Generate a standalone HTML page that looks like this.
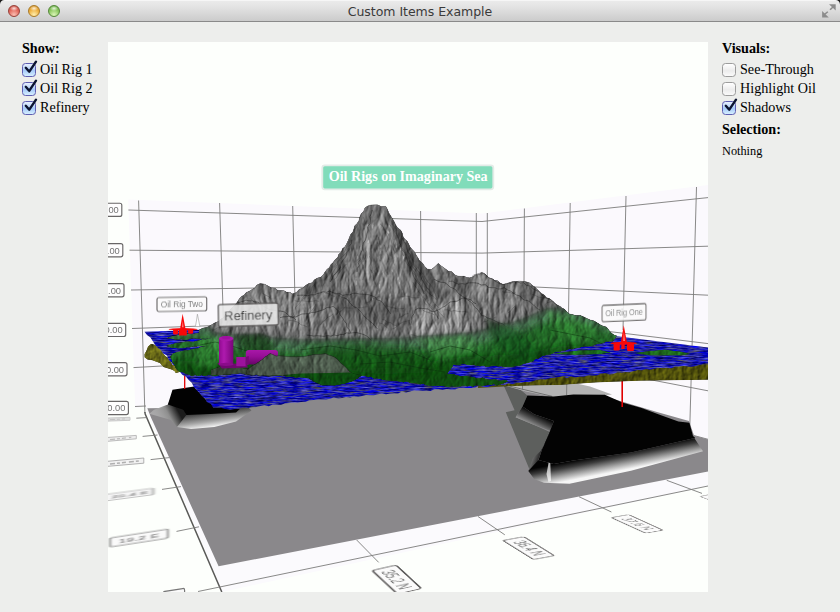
<!DOCTYPE html>
<html><head><meta charset="utf-8"><title>Custom Items Example</title>
<style>
html,body{margin:0;padding:0;}
body{width:840px;height:612px;overflow:hidden;background:#edeeec;position:relative;font-family:"Liberation Serif","DejaVu Serif",serif;color:#000;}
#tb{position:absolute;left:0;top:0;width:840px;height:21px;background:linear-gradient(#ececec,#e4e4e4 30%,#cbcbcb);border-bottom:1px solid #8a8a8a;box-shadow:inset 0 1px 0 #f6f6f6;}
#tb .t{position:absolute;left:0;width:840px;top:3.5px;text-align:center;font-family:"DejaVu Sans","Liberation Sans",sans-serif;font-size:12.5px;color:#3a3a3a;letter-spacing:-0.03px;}
.tl{position:absolute;top:5px;width:12px;height:12px;border-radius:50%;box-sizing:border-box;}
.lbl{position:absolute;white-space:nowrap;font-size:14.15px;line-height:16px;}
.h{font-weight:bold;}
.cb{position:absolute;width:14px;height:14px;border-radius:3.5px;box-sizing:border-box;}
.cb.on{background:linear-gradient(#eaf1ff,#a6caf8 55%,#d6efff);border:1px solid #5e5eb2;}
.cb.off{background:linear-gradient(#ffffff,#ececec 55%,#fafafa);border:1px solid #9c9c9c;}
svg{position:absolute;left:0;top:0;}
</style></head><body>
<div id="tb">
 <div class="tl" style="left:8px;background:radial-gradient(ellipse 4px 2.6px at 50% 24%,rgba(255,255,255,.8),rgba(255,255,255,0)),radial-gradient(circle at 50% 88%,#fbc0b4,#e2685c 55%,#c0483e);border:1px solid #97413a;"></div>
 <div class="tl" style="left:28px;background:radial-gradient(ellipse 4px 2.6px at 50% 24%,rgba(255,255,255,.8),rgba(255,255,255,0)),radial-gradient(circle at 50% 88%,#fff0b0,#eeb040 55%,#cc8c24);border:1px solid #a97a28;"></div>
 <div class="tl" style="left:48px;background:radial-gradient(ellipse 4px 2.6px at 50% 24%,rgba(255,255,255,.8),rgba(255,255,255,0)),radial-gradient(circle at 50% 88%,#dcf6b8,#8cc860 55%,#5ea63c);border:1px solid #55883a;"></div>
 <div class="t">Custom Items Example</div>
</div>
<div class="lbl h" style="left:22px;top:40px;">Show:</div>
<div class="cb on" style="left:22px;top:63px;"></div><div class="lbl" style="left:40px;top:61px;">Oil Rig 1</div>
<div class="cb on" style="left:22px;top:82px;"></div><div class="lbl" style="left:40px;top:80px;">Oil Rig 2</div>
<div class="cb on" style="left:22px;top:101px;"></div><div class="lbl" style="left:40px;top:99px;">Refinery</div>

<div class="lbl h" style="left:722px;top:40px;">Visuals:</div>
<div class="cb off" style="left:722px;top:63px;"></div><div class="lbl" style="left:740px;top:61px;">See-Through</div>
<div class="cb off" style="left:722px;top:82px;"></div><div class="lbl" style="left:740px;top:80px;">Highlight Oil</div>
<div class="cb on" style="left:722px;top:101px;"></div><div class="lbl" style="left:740px;top:99px;">Shadows</div>
<div class="lbl h" style="left:722px;top:121px;">Selection:</div>
<div class="lbl" style="left:722px;top:142.5px;font-size:12.3px;">Nothing</div>

<svg width="840" height="612" viewBox="0 0 840 612">
<defs>
<clipPath id="vp"><rect x="108" y="42" width="600" height="550"/></clipPath>
<linearGradient id="gsk2" gradientUnits="userSpaceOnUse" x1="600" y1="455.5" x2="603.6" y2="474"><stop offset="0" stop-color="#030303"/><stop offset="0.3" stop-color="#3c3c3c"/><stop offset="0.65" stop-color="#9c9c9c"/><stop offset="1" stop-color="#f6f6f6"/></linearGradient>
<linearGradient id="gsk2l" gradientUnits="userSpaceOnUse" x1="547" y1="445" x2="536" y2="441"><stop offset="0" stop-color="#050505"/><stop offset="1" stop-color="#8c8c8c"/></linearGradient>
<linearGradient id="gsk2b" gradientUnits="userSpaceOnUse" x1="537" y1="414" x2="531" y2="426"><stop offset="0" stop-color="#080808"/><stop offset="0.45" stop-color="#484848"/><stop offset="1" stop-color="#a4a4a4"/></linearGradient>
<linearGradient id="gsk1" gradientUnits="userSpaceOnUse" x1="200" y1="406" x2="203" y2="428"><stop offset="0" stop-color="#000"/><stop offset="0.35" stop-color="#444"/><stop offset="0.75" stop-color="#a6a6a6"/><stop offset="1" stop-color="#f0f0f0"/></linearGradient>
<linearGradient id="gsk1b" gradientUnits="userSpaceOnUse" x1="172" y1="400" x2="150" y2="412"><stop offset="0" stop-color="#1c1c1c"/><stop offset="0.4" stop-color="#8e8e8e"/><stop offset="1" stop-color="#c8c8c8" stop-opacity="0.5"/></linearGradient>
<linearGradient id="gcyl" x1="0" y1="0" x2="1" y2="0"><stop offset="0" stop-color="#900a90"/><stop offset="0.35" stop-color="#ae1aae"/><stop offset="1" stop-color="#780678"/></linearGradient>
<linearGradient id="gtank" x1="0" y1="0" x2="0" y2="1"><stop offset="0" stop-color="#a818a8"/><stop offset="0.45" stop-color="#960e96"/><stop offset="1" stop-color="#680468"/></linearGradient>
<filter id="b03" x="-10%" y="-30%" width="120%" height="160%"><feGaussianBlur stdDeviation="0.35"/></filter>
<filter id="b05" x="-10%" y="-30%" width="120%" height="160%"><feGaussianBlur stdDeviation="0.5"/></filter>
<filter id="b07" x="-10%" y="-30%" width="120%" height="160%"><feGaussianBlur stdDeviation="0.8"/></filter>
<filter id="b2" x="-20%" y="-20%" width="140%" height="140%"><feGaussianBlur stdDeviation="2"/></filter>
<filter id="b3" x="-10%" y="-20%" width="120%" height="140%"><feGaussianBlur stdDeviation="3.5"/></filter>
<filter id="rock" x="140" y="195" width="570" height="200" filterUnits="userSpaceOnUse" color-interpolation-filters="sRGB">
  <feTurbulence type="turbulence" baseFrequency="0.09 0.04" numOctaves="4" seed="7" result="n"/>
  <feDiffuseLighting in="n" surfaceScale="0.9" diffuseConstant="1" lighting-color="#ffffff" result="l"><feDistantLight azimuth="200" elevation="30"/></feDiffuseLighting>
  <feComposite in="SourceGraphic" in2="l" operator="arithmetic" k1="1.66" k2="0" k3="0" k4="0" result="m"/>
  <feComposite in="m" in2="SourceGraphic" operator="in"/>
</filter>
<filter id="grass" x="140" y="290" width="570" height="110" filterUnits="userSpaceOnUse" color-interpolation-filters="sRGB">
  <feTurbulence type="turbulence" baseFrequency="0.07 0.05" numOctaves="4" seed="21" result="n"/>
  <feDiffuseLighting in="n" surfaceScale="0.75" diffuseConstant="1" lighting-color="#ffffff" result="l"><feDistantLight azimuth="200" elevation="30"/></feDiffuseLighting>
  <feComposite in="SourceGraphic" in2="l" operator="arithmetic" k1="1.9" k2="0" k3="0" k4="0" result="m"/>
  <feComposite in="m" in2="SourceGraphic" operator="in"/>
</filter>
<filter id="olive" x="140" y="330" width="570" height="70" filterUnits="userSpaceOnUse" color-interpolation-filters="sRGB">
  <feTurbulence type="fractalNoise" baseFrequency="0.2 0.12" numOctaves="3" seed="11" result="n"/>
  <feDiffuseLighting in="n" surfaceScale="0.9" diffuseConstant="1" lighting-color="#ffffff" result="l"><feDistantLight azimuth="220" elevation="30"/></feDiffuseLighting>
  <feComposite in="SourceGraphic" in2="l" operator="arithmetic" k1="1.8" k2="0" k3="0" k4="0" result="m"/>
  <feComposite in="m" in2="SourceGraphic" operator="in"/>
</filter>
<filter id="sea" x="140" y="315" width="570" height="100" filterUnits="userSpaceOnUse" color-interpolation-filters="sRGB">
  <feTurbulence type="fractalNoise" baseFrequency="0.09 0.8" numOctaves="3" seed="3" result="n"/>
  <feColorMatrix in="n" type="matrix" values="0 0.8 0 0 -0.27  0 0.8 0 0 -0.27  1.0 0 0 0 0.15  0 0 0 0 1" result="c"/>
  <feComposite in="c" in2="SourceGraphic" operator="in"/>
</filter>
</defs>
<g clip-path="url(#vp)">
<rect x="108" y="42" width="600" height="550" fill="#fdfffc"/>
<polygon points="128.2,199.5 482.0,213.5 482.0,380.0 145.0,407.0 135.2,408.0" fill="#fbf9fd"/>
<polygon points="482.0,213.5 708.0,185.0 708.0,439.3 482.0,379.0" fill="#fbf9fd"/>
<polygon points="145.0,407.0 482.0,379.0 708.0,439.3 708.0,486.0 222.0,592.0" fill="#fbfafd"/>
<line x1="128.4" y1="210" x2="482" y2="221.5" stroke="#7c7c7a" stroke-width="0.9" fill="none"/>
<line x1="482" y1="221.5" x2="708" y2="197.6" stroke="#7c7c7a" stroke-width="0.9" fill="none"/>
<line x1="129.5" y1="250.2" x2="482" y2="253.1" stroke="#7c7c7a" stroke-width="0.9" fill="none"/>
<line x1="482" y1="253.1" x2="708" y2="246.2" stroke="#7c7c7a" stroke-width="0.9" fill="none"/>
<line x1="131" y1="290" x2="482" y2="284.5" stroke="#7c7c7a" stroke-width="0.9" fill="none"/>
<line x1="482" y1="284.5" x2="708" y2="295.2" stroke="#7c7c7a" stroke-width="0.9" fill="none"/>
<line x1="132" y1="328.5" x2="482" y2="316" stroke="#7c7c7a" stroke-width="0.9" fill="none"/>
<line x1="482" y1="316" x2="708" y2="343.6" stroke="#7c7c7a" stroke-width="0.9" fill="none"/>
<line x1="133.5" y1="367.6" x2="482" y2="348" stroke="#7c7c7a" stroke-width="0.9" fill="none"/>
<line x1="482" y1="347.3" x2="708" y2="390.8" stroke="#7c7c7a" stroke-width="0.9" fill="none"/>
<line x1="135" y1="406.5" x2="146" y2="406" stroke="#7c7c7a" stroke-width="0.9" fill="none"/>
<line x1="138.6" y1="200.5" x2="144.9" y2="413" stroke="#7c7c7a" stroke-width="0.9" fill="none"/>
<line x1="219.6" y1="203" x2="224" y2="340" stroke="#7c7c7a" stroke-width="0.9" fill="none"/>
<line x1="292.7" y1="206" x2="295" y2="300" stroke="#7c7c7a" stroke-width="0.9" fill="none"/>
<line x1="420.6" y1="211" x2="421" y2="265" stroke="#7c7c7a" stroke-width="0.9" fill="none"/>
<line x1="476.3" y1="213" x2="476.3" y2="280" stroke="#7c7c7a" stroke-width="0.9" fill="none"/>
<line x1="487.3" y1="213" x2="487.3" y2="285" stroke="#7c7c7a" stroke-width="0.9" fill="none"/>
<line x1="524.4" y1="208.5" x2="524" y2="285" stroke="#7c7c7a" stroke-width="0.9" fill="none"/>
<line x1="570.2" y1="203" x2="568.5" y2="315" stroke="#7c7c7a" stroke-width="0.9" fill="none"/>
<line x1="626" y1="196" x2="623" y2="330" stroke="#7c7c7a" stroke-width="0.9" fill="none"/>
<line x1="696.5" y1="187" x2="689.6" y2="434" stroke="#7c7c7a" stroke-width="0.9" fill="none"/>
<polyline points="144.9,412 145.2,414 221.8,592" stroke="#5a5a58" stroke-width="1.5" fill="none"/>
<line x1="198" y1="591.5" x2="708" y2="486" stroke="#7c7c7a" stroke-width="0.9" fill="none"/>
<line x1="136.3" y1="418.2" x2="146.5" y2="417.6" stroke="#7c7c7a" stroke-width="0.9" fill="none"/>
<line x1="142.6" y1="436.4" x2="157.5" y2="435" stroke="#7c7c7a" stroke-width="0.9" fill="none"/>
<line x1="150.6" y1="459.6" x2="169.5" y2="457.6" stroke="#7c7c7a" stroke-width="0.9" fill="none"/>
<line x1="162" y1="489.4" x2="181" y2="486.6" stroke="#7c7c7a" stroke-width="0.9" fill="none"/>
<line x1="176.5" y1="531.4" x2="199" y2="526.8" stroke="#7c7c7a" stroke-width="0.9" fill="none"/>
<line x1="356.7" y1="540" x2="378.7" y2="562.4" stroke="#7c7c7a" stroke-width="0.9" fill="none"/>
<line x1="478" y1="516.5" x2="504.8" y2="534.8" stroke="#7c7c7a" stroke-width="0.9" fill="none"/>
<line x1="579" y1="496.7" x2="611.4" y2="512" stroke="#7c7c7a" stroke-width="0.9" fill="none"/>
<line x1="666.7" y1="480.3" x2="702" y2="493.4" stroke="#7c7c7a" stroke-width="0.9" fill="none"/>
<line x1="482" y1="379" x2="708" y2="439.3" stroke="#7c7c7a" stroke-width="0.9" fill="none"/>
<polygon points="147.3,408.3 212.0,407.6 216.0,403.0 330.0,395.0 410.0,388.0 504.0,381.0 560.0,381.0 600.0,395.0 657.0,412.0 689.0,421.0 694.0,435.5 708.0,439.5 708.0,471.6 218.6,566.3 151.2,417.9" fill="#8a888b"/>
<polygon points="503.8,385.8 508.7,385.8 520.5,389.7 527.4,395.6 522.5,406.4 515.6,417.2 534.2,425.0 550.0,431.9 546.0,441.7 540.0,451.5 529.3,469.1 505.8,412.3 514.6,410.3" fill="#5d5f5d"/>
<polygon points="504.0,385.5 540.0,384.0 572.0,382.5 590.0,386.5 612.0,394.5 604.0,395.5 552.0,397.0 526.0,391.5" fill="#b3b3b3"/>
<line x1="504.8" y1="385" x2="552" y2="396.3" stroke="#6a6a6a" stroke-width="0.9"/>
<line x1="522.6" y1="381" x2="522.5" y2="390" stroke="#777" stroke-width="0.9"/>
<line x1="566.8" y1="381" x2="566.6" y2="395" stroke="#777" stroke-width="0.9"/>
<polygon points="522.5,406.4 534.2,414.2 553.8,421.0 550.0,430.9 544.0,428.5 534.2,425.0 515.6,417.2" fill="url(#gsk2b)"/>
<polygon points="553.8,421.0 549.0,433.8 542.0,449.5 537.2,463.2 528.3,471.0 533.0,458.0 540.0,451.5 546.0,441.7 550.0,431.9" fill="url(#gsk2l)"/>
<polygon points="538.5,460.0 553.8,464.0 573.4,460.5 631.0,452.5 695.0,438.0 693.0,436.0 703.0,451.2 631.0,470.8 569.5,483.8 544.0,482.8 534.2,478.9 528.3,471.0" fill="url(#gsk2)"/>
<polygon points="550,455 551,481 548.5,482 546.5,474" fill="#fff" opacity="0.7" filter="url(#b05)"/>
<polygon points="527.4,395.6 553.8,396.6 573.4,394.6 604.8,394.8 623.0,402.7 641.6,408.0 661.0,415.3 678.4,421.4 689.4,422.7 693.0,436.0 695.0,438.0 631.0,452.5 573.4,460.5 553.8,464.0 538.5,460.0 542.0,449.5 549.0,433.8 553.8,421.0 534.2,414.2 522.5,406.4" fill="#030303"/>
<polygon points="180.0,404.0 177.0,426.9 191.0,429.0 214.3,426.9 236.0,421.4 251.5,410.6 246.8,406.0 210.0,400.0" fill="url(#gsk1)"/>
<polygon points="172.0,396.0 167.9,404.4 154.0,409.8 149.3,413.7 171.0,420.0 177.0,427.0 186.4,415.0 183.0,409.0" fill="url(#gsk1b)"/>
<polygon points="172.5,389.7 194.2,386.6 197.3,390.5 213.0,407.0 240.0,408.8 236.0,412.5 210.0,414.0 186.4,415.0 183.3,409.8 167.9,404.4" fill="#020202"/>
<line x1="184.7" y1="376" x2="184.7" y2="389" stroke="#e00000" stroke-width="1.3"/>
<line x1="622.2" y1="380" x2="622.2" y2="407" stroke="#e00000" stroke-width="1.6"/>
<polygon points="500.0,381.0 550.0,376.0 613.6,371.6 642.0,368.0 708.0,362.6 708.0,379.8 640.0,380.7 595.7,382.5 560.0,385.0 530.0,385.5 504.0,386.5" fill="#58580d" filter="url(#olive)"/>
<polygon points="478.0,386.0 504.0,384.5 504.0,386.5 478.0,388.0" fill="#4e4e10"/>
<polygon points="144.5,357.5 144.4,354.1 146.2,351.1 147.9,346.4 151.0,343.7 155.1,344.8 158.5,348.0 160.7,349.6 162.2,351.8 163.9,353.9 165.5,356.1 167.8,357.6 169.1,360.1 171.2,361.8 172.2,364.6 175.1,365.5 175.8,368.6 178.3,369.9 180.0,372.0 175.8,373.2 174.3,371.0 171.9,369.7 168.0,368.6 163.8,367.3 161.8,365.5 160.1,363.2 156.1,361.7 152.0,360.3 147.8,359.8" fill="#74741a" filter="url(#olive)"/>
<polygon points="144.5,331.8 482.0,319.5 708.0,347.5 708.0,364.2 703.8,364.2 699.7,364.7 695.7,366.3 691.6,366.7 687.4,366.5 683.2,365.9 679.1,366.8 675.0,366.8 670.9,368.2 666.7,367.9 662.6,367.9 658.4,368.0 654.3,368.4 650.3,369.9 646.1,368.9 642.0,370.2 637.9,369.9 633.9,370.9 629.9,372.2 625.7,371.9 621.7,372.5 617.5,372.2 613.6,374.0 609.4,374.6 605.0,373.3 600.8,373.9 596.7,375.6 592.4,375.8 588.2,375.5 584.0,376.6 579.7,376.6 575.5,377.4 571.2,376.4 567.0,378.0 562.6,376.5 558.4,377.0 554.2,377.6 550.0,378.3 545.9,379.4 541.6,379.3 537.4,379.8 533.3,380.9 529.2,382.3 524.9,381.8 520.8,383.0 516.5,383.0 512.4,384.0 508.1,383.5 504.0,385.2 499.9,384.7 495.8,385.2 491.7,385.7 487.7,387.0 483.6,387.1 479.4,385.8 475.4,387.5 471.4,387.9 467.2,388.0 463.1,387.8 459.0,388.1 455.0,389.4 450.9,389.7 446.8,389.0 442.7,389.9 438.6,389.3 434.5,389.2 430.5,390.9 426.3,390.4 422.3,390.8 418.1,390.4 414.0,390.3 410.0,391.6 406.0,392.4 401.9,391.5 398.1,393.5 394.0,393.3 390.0,393.5 386.1,394.3 382.0,393.6 378.0,394.3 374.0,395.2 370.0,395.2 366.0,395.0 362.0,396.1 358.1,397.0 354.0,396.5 350.1,397.4 346.0,396.9 342.1,398.1 338.1,398.6 333.9,397.5 330.0,398.7 326.0,399.5 321.8,399.4 317.7,399.6 313.6,400.1 309.5,400.3 305.5,401.8 301.4,401.9 297.3,402.5 293.2,402.6 289.1,403.0 285.0,403.3 281.0,404.9 276.8,404.7 272.7,404.5 268.7,406.3 264.5,405.3 260.4,405.9 256.4,406.9 252.3,407.3 248.2,408.1 244.0,407.6 240.0,408.5 235.0,409.1 230.0,409.8 225.0,409.1 221.1,407.7 217.0,407.7 213.1,407.4 210.9,403.9 206.8,402.1 204.9,398.3 201.6,395.8 199.1,392.5 196.1,389.8 193.6,386.5 191.7,382.7 188.7,379.9 186.1,376.8 182.2,374.8 179.8,371.4 177.8,367.8 174.0,365.7 171.4,362.5 168.5,359.6 166.9,355.6 163.3,353.4 160.8,350.1 157.5,347.6 154.9,344.4 152.7,340.9 150.4,337.5 147.0,335.0" fill="#1a1ac0" filter="url(#sea)"/>
<clipPath id="terclip"><polygon points="199.0,329.9 202.8,328.0 206.9,327.2 211.9,324.5 215.2,322.5 218.9,321.3 220.9,318.9 224.0,317.4 225.3,314.2 228.2,312.7 229.8,309.8 232.3,307.5 234.7,305.0 237.0,302.5 238.9,299.3 241.2,296.4 244.1,295.1 246.0,292.5 249.0,291.3 251.5,289.7 254.6,288.0 256.8,285.1 260.0,283.5 264.5,284.0 268.6,286.2 271.4,287.8 274.7,288.0 277.4,289.9 280.6,290.5 283.8,290.4 286.6,292.1 289.8,292.2 292.5,293.8 296.3,292.4 299.1,289.3 302.9,287.9 305.4,285.4 308.5,283.6 312.0,282.7 314.3,279.8 317.3,278.0 321.0,277.1 323.4,274.4 325.1,271.8 326.9,269.3 329.4,267.4 330.7,264.6 333.1,262.6 334.9,259.7 337.6,257.6 338.7,254.3 341.3,252.0 342.3,248.8 345.1,246.5 346.7,243.6 348.1,240.6 349.3,237.4 350.6,234.5 352.8,232.0 353.8,229.0 354.6,225.7 357.1,223.4 358.8,220.7 359.5,217.4 361.0,214.0 363.6,211.2 364.9,207.8 367.6,205.9 370.8,204.9 374.2,204.8 377.5,204.7 381.4,206.5 385.8,206.2 387.5,209.3 388.8,212.7 390.7,215.8 392.6,218.7 394.3,221.7 395.8,224.9 397.6,227.8 400.7,230.0 402.3,233.1 403.0,236.3 404.6,238.9 407.1,241.0 408.7,243.7 409.9,246.6 411.8,249.0 414.3,251.6 416.1,254.7 417.9,257.7 419.6,260.8 422.6,263.0 424.6,266.3 427.4,268.9 431.3,269.5 433.8,267.5 436.1,265.4 438.1,263.3 441.5,266.0 445.1,268.6 448.2,270.9 452.1,271.8 454.8,274.8 457.8,275.9 460.9,276.2 464.1,276.1 466.9,277.5 469.9,277.7 472.9,276.6 475.7,275.0 478.9,274.4 481.9,272.8 485.6,274.4 488.3,277.5 492.1,278.8 494.7,280.3 497.9,280.7 500.2,282.9 503.0,284.2 506.3,283.9 509.3,282.5 512.5,281.5 515.8,281.8 519.0,280.9 522.7,281.3 526.4,281.8 530.0,282.9 532.2,285.3 534.9,286.9 537.1,289.2 539.4,291.3 541.7,293.4 544.5,295.0 546.4,297.5 549.4,298.6 551.8,300.4 554.2,302.4 556.3,304.6 559.0,306.0 561.5,307.7 564.5,309.1 566.7,311.5 569.0,313.7 572.6,314.6 576.2,315.5 580.1,315.3 583.6,316.7 587.0,318.4 590.4,319.9 593.9,320.7 596.9,322.6 599.9,324.4 603.0,326.0 606.5,326.9 608.6,329.8 610.9,332.6 613.7,334.8 616.7,335.7 613.0,341.2 609.7,341.3 606.4,341.6 603.3,343.1 600.0,343.6 597.0,343.9 594.1,345.0 591.2,346.1 588.0,346.2 584.7,346.3 581.5,347.1 578.3,347.7 575.0,348.1 572.1,349.3 568.9,349.0 566.0,350.3 562.9,350.5 560.0,351.5 556.9,351.6 553.9,352.4 551.1,354.2 548.0,354.4 545.1,355.3 541.8,356.0 539.2,358.2 535.7,358.5 533.2,361.0 530.0,362.0 527.0,363.0 523.8,363.5 521.0,364.9 518.0,365.8 514.7,366.3 511.3,366.7 508.0,366.7 504.7,366.9 501.3,365.9 498.0,366.2 495.0,365.8 492.0,365.6 489.0,366.5 486.0,366.5 483.0,365.4 480.0,366.3 477.0,365.6 474.0,365.1 471.0,364.9 468.0,364.8 465.0,364.1 462.0,363.9 459.0,364.9 456.0,364.7 453.3,364.5 451.5,367.9 449.1,370.8 447.0,374.1 450.3,374.0 453.7,374.2 456.8,375.6 460.1,376.0 463.4,376.1 466.8,376.0 470.0,376.8 473.2,377.0 476.3,378.2 479.4,378.7 482.7,377.6 485.8,379.4 488.9,379.7 492.1,379.8 495.4,379.2 498.4,380.7 501.6,380.8 504.9,380.1 508.1,381.3 504.1,382.9 500.0,384.4 497.0,385.4 494.0,384.1 491.0,384.7 488.0,385.1 485.0,385.3 482.0,386.0 479.0,385.2 476.0,385.3 473.0,386.6 470.0,385.8 467.0,386.2 464.0,385.3 461.0,386.3 458.0,386.5 455.0,386.5 452.0,386.3 449.0,386.7 446.0,386.5 443.0,386.0 440.0,386.0 436.7,385.6 433.3,385.9 429.9,385.8 426.6,385.2 423.4,383.7 420.0,384.2 416.7,383.3 413.3,383.1 410.0,382.6 406.8,381.6 403.3,382.3 400.0,381.4 396.7,381.1 393.3,380.9 390.0,380.4 386.6,380.3 383.3,380.1 380.1,378.7 377.0,378.2 373.9,378.4 371.1,376.8 367.9,377.2 365.0,375.8 362.0,375.5 358.4,376.9 355.4,379.3 351.9,380.7 348.5,381.5 345.2,382.7 341.9,384.0 338.5,384.6 335.0,385.2 331.9,385.0 328.8,384.5 325.6,384.6 322.5,384.9 319.7,383.7 316.9,382.5 314.6,380.4 311.8,379.2 309.0,377.9 305.8,377.7 302.7,377.0 299.5,377.1 296.3,377.4 293.2,377.0 290.0,376.6 286.9,376.7 283.8,375.6 280.6,375.8 277.5,375.9 274.4,376.0 271.2,375.8 268.1,376.3 265.0,375.6 261.9,375.1 258.7,375.2 255.6,374.6 252.6,373.5 249.4,373.3 246.2,374.2 243.2,372.5 240.0,372.7 236.8,372.7 233.6,373.0 230.5,374.3 227.3,374.7 224.1,374.2 220.9,374.2 217.8,375.6 214.7,376.1 211.4,375.3 208.1,374.9 204.9,376.0 201.6,375.1 198.3,375.9 195.1,375.1 191.7,375.9 189.0,374.4 185.9,373.9 183.3,372.2 180.1,372.0 177.6,370.2 175.5,367.8 174.6,364.9 172.6,362.5 171.7,359.6 170.2,356.7 173.0,353.4 176.0,352.6 179.1,352.1 182.0,351.1 185.0,350.5 188.1,350.6 191.0,349.4 193.9,348.8 197.6,348.4 200.9,347.0 204.7,347.0 208.0,345.6 205.1,346.5 202.0,346.2 198.9,345.5 196.0,346.5 193.0,346.3 190.0,347.3 187.0,347.2 184.0,347.9 181.0,348.1 178.0,348.2 175.0,347.8 172.0,347.7 166.8,346.0 171.0,344.7 174.6,343.6 178.3,343.0 182.0,342.5 185.4,341.8 189.0,341.8 192.6,342.2 196.0,341.0 199.2,340.4 202.2,339.2 205.6,339.4 208.8,338.5 212.0,338.1 209.0,338.3 206.0,338.7 203.0,338.6 200.0,338.8 197.0,338.4 194.0,338.3 191.0,338.5 188.0,339.4 184.8,340.1 181.5,339.0 178.3,339.5 175.0,339.5 170.9,338.5 166.9,338.2 172.0,336.3 175.2,335.7 178.4,334.8 181.6,334.2 185.0,334.3 188.4,333.5 192.1,334.3 195.5,333.3 199.0,332.7"/></clipPath>
<g filter="url(#rock)">
<polygon points="199.0,329.9 202.8,328.0 206.9,327.2 211.9,324.5 215.2,322.5 218.9,321.3 220.9,318.9 224.0,317.4 225.3,314.2 228.2,312.7 229.8,309.8 232.3,307.5 234.7,305.0 237.0,302.5 238.9,299.3 241.2,296.4 244.1,295.1 246.0,292.5 249.0,291.3 251.5,289.7 254.6,288.0 256.8,285.1 260.0,283.5 264.5,284.0 268.6,286.2 271.4,287.8 274.7,288.0 277.4,289.9 280.6,290.5 283.8,290.4 286.6,292.1 289.8,292.2 292.5,293.8 296.3,292.4 299.1,289.3 302.9,287.9 305.4,285.4 308.5,283.6 312.0,282.7 314.3,279.8 317.3,278.0 321.0,277.1 323.4,274.4 325.1,271.8 326.9,269.3 329.4,267.4 330.7,264.6 333.1,262.6 334.9,259.7 337.6,257.6 338.7,254.3 341.3,252.0 342.3,248.8 345.1,246.5 346.7,243.6 348.1,240.6 349.3,237.4 350.6,234.5 352.8,232.0 353.8,229.0 354.6,225.7 357.1,223.4 358.8,220.7 359.5,217.4 361.0,214.0 363.6,211.2 364.9,207.8 367.6,205.9 370.8,204.9 374.2,204.8 377.5,204.7 381.4,206.5 385.8,206.2 387.5,209.3 388.8,212.7 390.7,215.8 392.6,218.7 394.3,221.7 395.8,224.9 397.6,227.8 400.7,230.0 402.3,233.1 403.0,236.3 404.6,238.9 407.1,241.0 408.7,243.7 409.9,246.6 411.8,249.0 414.3,251.6 416.1,254.7 417.9,257.7 419.6,260.8 422.6,263.0 424.6,266.3 427.4,268.9 431.3,269.5 433.8,267.5 436.1,265.4 438.1,263.3 441.5,266.0 445.1,268.6 448.2,270.9 452.1,271.8 454.8,274.8 457.8,275.9 460.9,276.2 464.1,276.1 466.9,277.5 469.9,277.7 472.9,276.6 475.7,275.0 478.9,274.4 481.9,272.8 485.6,274.4 488.3,277.5 492.1,278.8 494.7,280.3 497.9,280.7 500.2,282.9 503.0,284.2 506.3,283.9 509.3,282.5 512.5,281.5 515.8,281.8 519.0,280.9 522.7,281.3 526.4,281.8 530.0,282.9 532.2,285.3 534.9,286.9 537.1,289.2 539.4,291.3 541.7,293.4 544.5,295.0 546.4,297.5 549.4,298.6 551.8,300.4 554.2,302.4 556.3,304.6 559.0,306.0 561.5,307.7 564.5,309.1 566.7,311.5 569.0,313.7 572.6,314.6 576.2,315.5 580.1,315.3 583.6,316.7 587.0,318.4 590.4,319.9 593.9,320.7 596.9,322.6 599.9,324.4 603.0,326.0 606.5,326.9 608.6,329.8 610.9,332.6 613.7,334.8 616.7,335.7 613.0,341.2 609.7,341.3 606.4,341.6 603.3,343.1 600.0,343.6 597.0,343.9 594.1,345.0 591.2,346.1 588.0,346.2 584.7,346.3 581.5,347.1 578.3,347.7 575.0,348.1 572.1,349.3 568.9,349.0 566.0,350.3 562.9,350.5 560.0,351.5 556.9,351.6 553.9,352.4 551.1,354.2 548.0,354.4 545.1,355.3 541.8,356.0 539.2,358.2 535.7,358.5 533.2,361.0 530.0,362.0 527.0,363.0 523.8,363.5 521.0,364.9 518.0,365.8 514.7,366.3 511.3,366.7 508.0,366.7 504.7,366.9 501.3,365.9 498.0,366.2 495.0,365.8 492.0,365.6 489.0,366.5 486.0,366.5 483.0,365.4 480.0,366.3 477.0,365.6 474.0,365.1 471.0,364.9 468.0,364.8 465.0,364.1 462.0,363.9 459.0,364.9 456.0,364.7 453.3,364.5 451.5,367.9 449.1,370.8 447.0,374.1 450.3,374.0 453.7,374.2 456.8,375.6 460.1,376.0 463.4,376.1 466.8,376.0 470.0,376.8 473.2,377.0 476.3,378.2 479.4,378.7 482.7,377.6 485.8,379.4 488.9,379.7 492.1,379.8 495.4,379.2 498.4,380.7 501.6,380.8 504.9,380.1 508.1,381.3 504.1,382.9 500.0,384.4 497.0,385.4 494.0,384.1 491.0,384.7 488.0,385.1 485.0,385.3 482.0,386.0 479.0,385.2 476.0,385.3 473.0,386.6 470.0,385.8 467.0,386.2 464.0,385.3 461.0,386.3 458.0,386.5 455.0,386.5 452.0,386.3 449.0,386.7 446.0,386.5 443.0,386.0 440.0,386.0 436.7,385.6 433.3,385.9 429.9,385.8 426.6,385.2 423.4,383.7 420.0,384.2 416.7,383.3 413.3,383.1 410.0,382.6 406.8,381.6 403.3,382.3 400.0,381.4 396.7,381.1 393.3,380.9 390.0,380.4 386.6,380.3 383.3,380.1 380.1,378.7 377.0,378.2 373.9,378.4 371.1,376.8 367.9,377.2 365.0,375.8 362.0,375.5 358.4,376.9 355.4,379.3 351.9,380.7 348.5,381.5 345.2,382.7 341.9,384.0 338.5,384.6 335.0,385.2 331.9,385.0 328.8,384.5 325.6,384.6 322.5,384.9 319.7,383.7 316.9,382.5 314.6,380.4 311.8,379.2 309.0,377.9 305.8,377.7 302.7,377.0 299.5,377.1 296.3,377.4 293.2,377.0 290.0,376.6 286.9,376.7 283.8,375.6 280.6,375.8 277.5,375.9 274.4,376.0 271.2,375.8 268.1,376.3 265.0,375.6 261.9,375.1 258.7,375.2 255.6,374.6 252.6,373.5 249.4,373.3 246.2,374.2 243.2,372.5 240.0,372.7 236.8,372.7 233.6,373.0 230.5,374.3 227.3,374.7 224.1,374.2 220.9,374.2 217.8,375.6 214.7,376.1 211.4,375.3 208.1,374.9 204.9,376.0 201.6,375.1 198.3,375.9 195.1,375.1 191.7,375.9 189.0,374.4 185.9,373.9 183.3,372.2 180.1,372.0 177.6,370.2 175.5,367.8 174.6,364.9 172.6,362.5 171.7,359.6 170.2,356.7 173.0,353.4 176.0,352.6 179.1,352.1 182.0,351.1 185.0,350.5 188.1,350.6 191.0,349.4 193.9,348.8 197.6,348.4 200.9,347.0 204.7,347.0 208.0,345.6 205.1,346.5 202.0,346.2 198.9,345.5 196.0,346.5 193.0,346.3 190.0,347.3 187.0,347.2 184.0,347.9 181.0,348.1 178.0,348.2 175.0,347.8 172.0,347.7 166.8,346.0 171.0,344.7 174.6,343.6 178.3,343.0 182.0,342.5 185.4,341.8 189.0,341.8 192.6,342.2 196.0,341.0 199.2,340.4 202.2,339.2 205.6,339.4 208.8,338.5 212.0,338.1 209.0,338.3 206.0,338.7 203.0,338.6 200.0,338.8 197.0,338.4 194.0,338.3 191.0,338.5 188.0,339.4 184.8,340.1 181.5,339.0 178.3,339.5 175.0,339.5 170.9,338.5 166.9,338.2 172.0,336.3 175.2,335.7 178.4,334.8 181.6,334.2 185.0,334.3 188.4,333.5 192.1,334.3 195.5,333.3 199.0,332.7" fill="#878787"/>
<g clip-path="url(#terclip)">
<polygon points="386.0,206.0 392.0,215.0 402.0,233.0 412.0,249.0 428.0,269.0 445.0,290.0 430.0,300.0 410.0,270.0 398.0,240.0 388.0,220.0" fill="#505050" opacity="0.6" filter="url(#b2)"/>
<polygon points="364.0,207.0 358.0,218.0 349.0,237.0 341.0,252.0 333.0,263.0 323.0,275.0 300.0,292.0 318.0,292.0 340.0,268.0 352.0,245.0 362.0,222.0 368.0,210.0" fill="#555" opacity="0.5" filter="url(#b2)"/>
<polygon points="368.0,215.0 384.0,215.0 400.0,260.0 410.0,300.0 350.0,305.0 345.0,280.0 356.0,250.0" fill="#a0a0a0" opacity="0.4" filter="url(#b3)"/>
<polygon points="330.0,292.0 360.0,290.0 395.0,300.0 420.0,318.0 400.0,330.0 360.0,318.0 335.0,312.0" fill="#5a5a5a" opacity="0.5" filter="url(#b3)"/>
<polygon points="245.0,295.0 262.0,286.0 290.0,296.0 310.0,300.0 320.0,322.0 280.0,330.0 250.0,320.0" fill="#a8a8a8" opacity="0.5" filter="url(#b3)"/>
<polygon points="432.0,268.0 438.0,264.0 446.0,272.0 452.0,290.0 436.0,290.0" fill="#a8a8a8" opacity="0.45" filter="url(#b2)"/>
<polygon points="446.0,272.0 456.0,276.0 470.0,279.0 470.0,295.0 452.0,292.0" fill="#5c5c5c" opacity="0.45" filter="url(#b2)"/>
<polygon points="470.0,280.0 482.0,274.0 490.0,292.0 470.0,300.0" fill="#a8a8a8" opacity="0.45" filter="url(#b2)"/>
<polygon points="484.0,276.0 503.0,285.0 519.0,282.0 530.0,284.0 545.0,296.0 560.0,308.0 545.0,312.0 520.0,300.0 500.0,296.0" fill="#5e5e5e" opacity="0.4" filter="url(#b2)"/>
<polygon points="411.0,324.8 411.4,317.0 415.2,309.5 424.8,308.6 434.3,311.4 447.6,303.8 462.9,298.0 468.0,318.0 462.0,345.0 438.0,353.0 419.0,340.0" fill="#999" opacity="0.75" filter="url(#b07)"/>
<polygon points="462.9,298.0 472.4,303.8 481.9,315.2 499.0,322.9 514.3,330.5 529.5,343.8 544.8,359.0 500.0,362.0 470.0,350.0 468.0,318.0" fill="#6e6e6e" opacity="0.6" filter="url(#b07)"/>
<polygon points="476.0,278.0 481.9,273.0 489.0,280.0 492.0,298.0 480.0,300.0" fill="#b0b0b0" opacity="0.6" filter="url(#b07)"/>
<polygon points="502.0,286.0 514.3,282.5 520.0,290.0 518.0,306.0 504.0,303.0" fill="#b0b0b0" opacity="0.55" filter="url(#b07)"/>
<polygon points="414.0,312.0 440.0,303.0 465.0,300.0 478.0,312.0 470.0,340.0 430.0,345.0 412.0,335.0" fill="#b0b0b0" opacity="0.5" filter="url(#b3)"/>
</g>
<polyline points="297.0,295.3 300.4,295.2 303.9,295.2 307.4,295.8 310.8,294.8 314.3,294.8 317.2,293.6 320.3,292.9 323.2,291.7 326.6,292.3 329.5,291.0 332.7,292.6 336.2,293.5 339.8,293.7 342.9,295.5 346.2,294.6 349.7,294.9 352.8,293.3 356.1,293.3 359.4,294.0 362.8,294.2 366.2,294.4 369.4,294.9 372.3,296.0 375.3,297.1 377.2,300.0 380.3,300.8 382.6,302.6 384.4,305.5 386.6,308.2 388.7,310.9 390.5,313.8" fill="none" stroke="#333" stroke-width="0.8" opacity="0.7" stroke-linejoin="round"/>
<polyline points="280.0,317.7 283.1,316.8 286.3,316.7 289.5,316.3 292.7,317.0 295.9,316.9 298.9,315.4 301.9,314.0 305.3,313.8 308.6,313.7 311.6,312.4 315.0,312.3 318.1,311.4 321.2,310.4 324.2,309.4 327.0,307.4 330.3,307.3 333.2,306.3 336.2,308.7 338.8,311.3 340.2,315.0 342.5,317.8 344.2,320.8 346.5,323.5 346.8,327.1 349.3,329.7 350.5,332.9" fill="none" stroke="#333" stroke-width="0.8" opacity="0.7" stroke-linejoin="round"/>
<polyline points="410.9,324.8 411.8,320.9 411.6,317.1 414.1,313.6 415.2,309.8 418.3,308.2 421.5,308.4 424.8,308.7 428.1,309.0 430.9,311.1 434.4,311.6 437.2,310.3 440.1,309.1 442.5,307.2 445.4,306.1 447.6,303.8 450.4,302.0 453.7,301.5 457.1,301.2 459.9,299.4 463.0,297.9 466.5,299.2 469.6,301.2 472.6,303.6 474.5,306.9 477.4,309.3 479.6,312.3 481.7,315.5 484.9,316.2 487.5,318.0 490.6,318.8 493.4,320.1 496.2,321.5 499.0,322.9 502.4,323.7 505.0,326.2 508.1,327.6 511.6,328.3 514.1,330.8 516.2,333.4 519.7,334.6 522.1,336.9 524.1,339.8 527.0,341.6 529.5,343.8 531.3,346.3 533.5,348.5 536.4,350.0 538.3,352.5 540.0,355.1 542.1,357.4 544.8,359.0" fill="none" stroke="#333" stroke-width="0.8" opacity="0.7" stroke-linejoin="round"/>
<polyline points="434.2,279.3 437.4,281.0 440.8,282.2 444.7,282.5 447.7,284.7 449.9,287.0 453.0,288.2 455.8,289.8 457.7,292.6 460.0,294.7 462.7,296.5 465.3,298.1 468.3,299.2 471.3,299.9 473.4,302.6 476.2,303.8" fill="none" stroke="#333" stroke-width="0.8" opacity="0.7" stroke-linejoin="round"/>
<polyline points="472.5,275.5 475.6,274.3 478.8,273.5 482.1,272.1 484.8,273.8 487.1,276.0 489.6,278.1 492.7,279.0 495.1,281.2 499.0,283.1 502.9,284.8 506.6,283.3 510.6,283.2 514.3,281.6 517.5,281.9 520.6,283.1 523.6,282.7 526.5,285.3 530.5,286.1 533.1,288.9 536.1,290.3 539.1,291.6 541.1,294.6 543.7,296.4 546.4,298.3 549.8,299.0 552.5,300.8 555.1,303.9 558.6,305.7 562.0,307.5" fill="none" stroke="#333" stroke-width="0.8" opacity="0.7" stroke-linejoin="round"/>
<polyline points="306.7,335.1 310.2,335.4 313.6,336.1 317.1,335.7 320.6,336.0 324.1,336.4 327.6,335.6 330.9,336.2 333.9,334.9 337.2,335.7 340.3,334.5 343.5,334.4 346.6,332.9 349.8,333.2 353.0,332.8 356.3,332.5 360.1,333.5 363.9,334.6 366.8,336.1 369.2,338.2 371.4,340.5" fill="none" stroke="#333" stroke-width="0.8" opacity="0.7" stroke-linejoin="round"/>
<polyline points="448.9,281.3 452.4,281.2 455.4,282.9 458.5,284.2 462.0,283.6 465.2,284.2 468.4,282.9 471.6,282.8 474.8,282.8 477.9,283.3 481.2,285.0 485.3,284.7 488.3,287.3 492.0,287.7 495.0,287.7 498.0,289.0 501.0,288.8 504.1,287.7 507.1,289.7 510.5,291.1 513.4,293.1 516.5,295.0 520.0,296.0 522.0,298.5 524.5,300.1 527.9,300.7 530.5,302.3 532.8,304.3 535.0,306.5 537.3,308.6 540.0,310.0" fill="none" stroke="#333" stroke-width="0.8" opacity="0.7" stroke-linejoin="round"/>
<polyline points="236.1,303.3 239.5,302.4 242.8,301.3 246.0,300.1 248.9,300.8 252.0,300.8 254.9,301.8 257.9,302.2 260.6,304.6 263.8,306.4 266.8,308.3 270.0,309.7 273.5,310.2 277.0,310.9 280.6,311.1 284.1,311.8 287.1,313.8 289.6,316.6 293.3,317.6 296.0,320.0" fill="none" stroke="#333" stroke-width="0.8" opacity="0.7" stroke-linejoin="round"/>
<polyline points="343.8,297.9 347.0,298.9 348.9,301.6 350.9,304.2 353.3,306.3 356.3,307.7 359.0,310.0 361.6,312.4 363.4,315.6 366.2,317.8 368.4,320.1 370.9,322.1 373.4,324.0 375.4,326.6 377.5,329.0" fill="none" stroke="#333" stroke-width="0.8" opacity="0.7" stroke-linejoin="round"/>
<polyline points="402.0,236.0 403.1,239.3 404.7,242.3 406.4,245.3 407.1,248.7 407.9,252.1 410.5,254.8 411.2,258.4 413.7,261.2 413.7,265.1 416.2,267.9 417.5,270.8 419.9,273.2 420.7,276.4 421.9,279.5 423.7,282.2 425.1,285.1 426.5,288.0 429.7,289.9 429.9,293.5 432.0,296.0" fill="none" stroke="#333" stroke-width="0.8" opacity="0.7" stroke-linejoin="round"/>
<polyline points="396.3,227.9 396.1,231.2 396.7,234.3 398.1,237.1 399.1,240.1 399.7,243.1 401.3,245.9 401.7,249.5 404.6,252.1 405.7,255.4 407.0,258.6 407.9,262.1 409.5,264.9 410.9,267.9 412.0,271.0 412.9,274.2 414.0,277.3 415.8,280.1 418.0,282.6 420.0,285.2 421.5,288.0 423.1,290.8 424.0,294.0" fill="none" stroke="#333" stroke-width="0.8" opacity="0.7" stroke-linejoin="round"/>
<polyline points="351.8,239.9 351.6,243.5 349.1,246.2 349.3,249.9 346.8,252.7 346.2,256.1 344.1,258.7 342.3,261.3 340.9,264.2 340.3,267.6 338.3,270.2 336.2,273.1 333.3,275.5 332.1,279.0 330.0,282.0" fill="none" stroke="#333" stroke-width="0.8" opacity="0.7" stroke-linejoin="round"/>
<polyline points="372.2,210.0 371.4,213.3 370.0,216.5 370.6,220.1 370.1,223.5 367.8,226.5 368.1,230.0 367.1,233.4 366.4,236.8 365.5,240.1 363.3,243.1 362.4,246.5 362.2,250.0 360.8,253.0 359.8,256.1 360.0,259.5 358.2,262.4 359.2,265.9 357.1,268.7 357.0,272.0" fill="none" stroke="#333" stroke-width="0.8" opacity="0.7" stroke-linejoin="round"/>
<polyline points="540.1,322.3 543.1,320.7 546.3,320.0 549.5,319.2 552.6,318.1 556.0,318.2 559.5,318.4 563.0,318.6 566.5,318.3 570.1,317.8 573.2,318.4 575.9,319.8 578.4,322.0 581.8,321.7 584.3,323.8 587.3,324.5 590.1,325.9 593.0,327.3 595.5,329.4 598.7,330.2 601.5,331.8 604.0,334.0" fill="none" stroke="#333" stroke-width="0.8" opacity="0.7" stroke-linejoin="round"/>
<polyline points="420.1,345.3 423.5,344.7 426.6,343.1 429.9,342.0 433.4,341.8 436.9,341.7 440.0,340.2 443.1,339.6 446.3,339.7 449.4,338.9 452.6,339.3 455.7,338.6 458.8,337.3 461.9,338.1 464.7,340.0 468.0,340.6 471.3,341.4 474.2,343.0 477.2,344.1 479.9,346.3 483.2,347.5 486.8,347.6 490.1,348.6 493.5,349.3 496.7,350.9 500.0,352.0" fill="none" stroke="#333" stroke-width="0.8" opacity="0.7" stroke-linejoin="round"/>
<g clip-path="url(#terclip)" fill="none" stroke="#3a3a3a" stroke-width="0.6" opacity="0.55">
<polyline points="310.8,306.6 308.1,309.6 307.6,313.5 306.6,317.4"/>
<polyline points="337.9,253.6 335.6,256.8 333.7,260.4 332.3,264.1"/>
<polyline points="314.9,284.0 312.1,286.9 311.4,290.8 308.9,293.9"/>
<polyline points="342.9,260.2 340.3,263.3 338.6,266.8 337.7,270.7 335.2,273.8 333.0,277.1 331.0,280.6"/>
<polyline points="311.6,287.1 311.1,291.0 309.9,294.8 308.7,298.6"/>
<polyline points="347.9,248.2 347.0,252.1 344.1,254.9 341.3,257.6 338.8,260.7 336.0,263.6 334.1,267.1"/>
<polyline points="336.7,252.6 333.8,255.4 332.3,259.1 330.2,262.5 328.9,266.3 326.3,269.2"/>
<polyline points="346.2,264.1 343.6,267.1 341.1,270.3 338.6,273.4 336.8,277.0 334.0,279.8"/>
<polyline points="359.9,246.0 358.7,249.9 357.9,253.8 356.5,257.5"/>
<polyline points="359.4,221.3 357.8,225.0 355.6,228.3 352.9,231.2 350.9,234.6"/>
<polyline points="316.1,303.8 314.2,307.3 311.8,310.5 309.0,313.3 307.0,316.8 306.2,320.7"/>
<polyline points="336.4,267.2 334.0,270.4 332.2,274.0 330.6,277.6 330.0,281.5"/>
<polyline points="303.3,298.4 301.0,301.6 298.2,304.4 295.5,307.4 294.8,311.3 293.2,315.0 290.4,317.8"/>
<polyline points="350.0,240.3 347.4,243.3 346.5,247.2 344.9,250.9 342.6,254.2 340.8,257.7 338.4,260.9 337.4,264.8 334.7,267.7"/>
<polyline points="332.2,269.0 330.4,272.6 328.0,275.8 325.3,278.7 324.7,282.6 322.7,286.1 322.0,290.0"/>
<polyline points="314.2,272.1 313.0,275.9 312.2,279.8 310.0,283.1 307.4,286.2 306.4,290.0 305.8,294.0 303.2,296.9 300.8,300.1"/>
<polyline points="422.0,272.3 423.3,276.1 424.2,280.0 425.1,283.9 427.0,287.5 429.9,290.2 431.7,293.8 433.7,297.2 436.8,299.8"/>
<polyline points="402.0,248.0 404.7,251.0 406.2,254.7 409.1,257.4 410.2,261.3 412.7,264.5 413.4,268.4 416.4,271.1"/>
<polyline points="412.6,281.8 414.6,285.4 417.1,288.5 418.7,292.1 421.6,294.9 423.0,298.7 424.1,302.5 427.0,305.3"/>
<polyline points="433.0,296.0 433.8,299.9 434.6,303.8 435.4,307.8 437.7,311.1 440.6,313.8 443.4,316.7"/>
<polyline points="420.9,271.6 423.6,274.6 425.4,278.2 427.6,281.5 430.4,284.4 432.7,287.7 434.0,291.5 435.9,295.1 437.0,298.9"/>
<polyline points="380.0,223.8 383.1,226.5 384.5,230.2 387.5,232.9 389.4,236.4 391.0,240.1 392.0,244.0 392.8,247.9 394.5,251.5"/>
<polyline points="423.3,289.7 425.6,293.1 426.7,296.9 427.6,300.8 428.5,304.7 430.9,307.9 433.6,310.9 436.3,313.9 437.8,317.6"/>
<polyline points="424.3,285.9 425.3,289.8 428.1,292.7 430.8,295.6 432.3,299.3 433.6,303.1 436.7,305.7 439.3,308.8"/>
<polyline points="413.7,273.6 416.3,276.6 417.6,280.4 420.2,283.5 422.1,287.0 423.0,290.9 425.1,294.3 427.8,297.4 428.7,301.2"/>
<polyline points="422.9,296.2 425.3,299.4 427.7,302.6 430.4,305.6 433.0,308.6 434.3,312.4 436.5,315.8 438.9,319.0"/>
<polyline points="405.3,260.6 407.2,264.2 409.9,267.1 412.6,270.1 414.9,273.4 416.9,276.8"/>
<polyline points="400.1,245.5 401.2,249.3 402.1,253.3 404.2,256.6 407.2,259.3"/>
<polyline points="389.7,224.3 392.0,227.7 394.0,231.2 396.4,234.3 398.0,238.0"/>
<polyline points="422.3,280.2 424.4,283.7 425.6,287.5 427.1,291.2 430.1,293.8 433.1,296.5"/>
<polyline points="391.2,220.4 392.5,224.2 394.9,227.4 397.2,230.7"/>
<polyline points="384.3,244.8 385.5,248.6 386.9,252.4 388.0,256.2 389.0,260.1"/>
<polyline points="411.6,266.2 414.7,268.8 416.6,272.3 417.7,276.2"/>
<polyline points="413.4,262.9 416.1,265.9 419.1,268.6 421.5,271.8 422.2,275.8 424.0,279.4 426.1,282.8 428.6,285.9 430.0,289.7"/>
<polyline points="366.4,250.7 367.1,254.6 367.8,258.5"/>
<polyline points="363.5,217.2 364.4,221.1 363.7,225.1"/>
<polyline points="378.6,236.6 379.2,240.6 379.4,244.6"/>
<polyline points="388.7,228.8 389.7,232.7 390.2,236.6 389.2,240.5 388.9,244.5 388.0,248.4"/>
<polyline points="363.2,248.8 363.9,252.8 363.5,256.8 361.9,260.5 361.2,264.5"/>
<polyline points="370.1,268.9 371.5,272.7 373.4,276.3 373.8,280.3 375.5,284.0"/>
<polyline points="371.2,269.9 372.8,273.6 373.2,277.6 374.6,281.3 375.6,285.2"/>
<polyline points="390.8,245.5 391.6,249.5 391.6,253.5 392.5,257.4 393.3,261.4 394.5,265.3"/>
<polyline points="369.4,256.2 371.0,259.9 370.9,263.9 372.4,267.6 373.2,271.6"/>
<polyline points="365.8,251.9 366.0,255.9 364.3,259.5"/>
<polyline points="391.5,245.3 391.6,249.3 391.3,253.3"/>
<polyline points="378.4,237.1 378.1,241.1 376.9,244.9 377.2,248.8 378.2,252.7 377.9,256.7"/>
<polyline points="371.3,244.8 370.7,248.8 371.4,252.8 370.6,256.8 371.1,260.8"/>
<polyline points="365.5,260.2 365.7,264.2 365.3,268.2 364.6,272.2 364.0,276.2 362.8,280.0"/>
<polyline points="514.7,323.6 511.7,325.3 510.1,328.4 507.3,330.4 505.8,333.5 502.8,335.3"/>
<polyline points="333.1,313.9 330.4,316.1 327.2,317.5 325.1,320.3 322.2,322.1 320.4,325.1"/>
<polyline points="228.7,319.4 231.6,321.2 235.1,321.6 238.5,322.2 241.8,323.1 244.9,324.6 248.3,325.4"/>
<polyline points="262.4,293.2 265.3,295.1 268.5,296.5 271.2,298.6"/>
<polyline points="580.7,298.5 583.6,300.3 587.0,300.9 590.1,302.3"/>
<polyline points="408.6,313.4 405.3,314.1 402.5,316.1 399.4,317.6"/>
<polyline points="553.7,300.6 550.5,301.9 547.1,302.6 544.6,305.0"/>
<polyline points="245.1,334.6 248.3,336.0 250.8,338.3 253.4,340.7 256.5,342.1"/>
<polyline points="509.3,326.8 512.8,326.6 516.3,326.2 519.8,326.7 523.2,327.5"/>
<polyline points="582.2,288.3 584.5,290.8 587.3,292.9 590.0,295.1 592.8,297.2 594.3,300.3"/>
<polyline points="538.9,325.0 542.4,324.8 545.8,325.8 549.3,325.9 552.8,325.8 556.1,327.1 559.5,326.4"/>
<polyline points="223.7,325.8 220.6,327.3 217.2,327.9 214.3,329.8 210.9,330.1 207.6,331.0"/>
<polyline points="288.2,320.2 291.7,320.6 295.1,321.2 298.3,322.4 300.8,324.7 304.2,325.5 307.3,327.0"/>
<polyline points="379.9,296.0 376.7,297.4 373.4,298.4 370.6,300.3 368.0,302.6 364.6,303.2"/>
<polyline points="547.5,320.8 551.0,321.1 553.6,323.4 556.6,325.1 559.8,326.3 562.6,328.3 565.4,330.2"/>
<polyline points="332.5,292.2 335.4,294.0 338.7,295.1 341.5,297.2 344.8,297.9 347.4,300.2 350.6,301.5"/>
<polyline points="580.4,288.7 578.8,291.8 575.8,293.4 572.7,295.1 569.7,296.9 568.1,299.9 566.5,303.0"/>
<polyline points="385.4,305.8 388.9,306.5 392.1,307.9 395.5,308.5"/>
<polyline points="390.6,306.9 394.1,307.6 397.3,309.1 400.7,308.6 404.3,308.5"/>
<polyline points="550.2,320.3 553.2,321.8 556.7,322.2 560.1,322.8 563.5,323.1"/>
<polyline points="532.1,294.4 535.4,295.4 538.4,297.2 541.8,297.6 545.2,297.9 548.6,298.5 551.7,300.1 555.0,301.2"/>
<polyline points="243.5,301.4 246.5,303.3 249.9,303.6 252.6,305.7"/>
<polyline points="255.0,306.8 251.6,307.4 249.1,309.7 246.5,312.0"/>
<polyline points="381.4,319.0 384.7,319.9 387.4,322.1 390.8,322.7 393.5,324.9 396.8,325.8"/>
<polyline points="421.9,309.3 424.7,311.4 428.0,312.4 431.3,313.3 434.4,314.9"/>
<polyline points="444.3,309.9 447.8,309.8 451.0,311.3 454.4,310.6 457.9,311.4 461.4,311.8 464.9,311.6 468.3,312.3"/>
<polyline points="346.7,305.6 344.4,308.1 341.9,310.5 338.8,312.1 336.3,314.5"/>
<polyline points="254.0,308.6 256.5,311.0 259.7,312.2 263.0,313.4 265.8,315.4"/>
<polyline points="502.1,291.7 505.6,292.3 509.1,292.1 512.3,293.5 515.8,292.8"/>
<polyline points="398.7,297.3 402.1,296.6 405.6,296.0 409.0,296.5 412.4,297.6 415.9,297.9 419.4,297.5"/>
<polyline points="343.6,307.7 347.1,307.9 350.6,308.2 354.1,307.8 357.6,307.2 361.1,307.8 364.5,307.0 368.0,306.8"/>
<polyline points="249.8,298.5 252.7,300.4 254.8,303.2 257.7,305.0"/>
<polyline points="410.6,334.6 414.1,335.2 417.4,336.5 420.8,335.8"/>
<polyline points="409.8,320.3 406.5,321.3 403.1,322.0 400.1,323.6 397.6,325.9 394.8,328.0 391.6,329.1"/>
<polyline points="495.7,317.1 492.6,318.6 489.2,319.3 486.5,321.4 483.1,321.9"/>
<polyline points="325.1,293.3 328.6,293.6 331.5,295.5 334.8,296.5"/>
<polyline points="379.1,322.9 382.4,323.8 385.0,326.1 387.8,328.1"/>
<polyline points="526.7,322.9 529.2,325.3 532.5,326.3 535.9,326.6 539.2,327.7 542.6,328.4 545.8,329.6 548.4,331.9"/>
<polyline points="515.2,306.0 512.6,308.3 510.6,311.2 507.7,313.0"/>
<polyline points="294.7,300.6 298.1,301.5 301.5,300.7 305.0,301.1 308.5,301.4 312.0,301.3 315.5,300.6 318.9,301.3"/>
</g>
<g clip-path="url(#terclip)" fill="#c8c8c8" opacity="0.55">
<ellipse cx="372.5" cy="298.9" rx="0.7" ry="1.5" transform="rotate(-4 372.5 298.9)"/>
<ellipse cx="388.9" cy="232.5" rx="0.7" ry="1.4" transform="rotate(-16 388.9 232.5)"/>
<ellipse cx="399.5" cy="283.3" rx="0.7" ry="1.3" transform="rotate(-9 399.5 283.3)"/>
<ellipse cx="389.1" cy="226.5" rx="0.7" ry="1.3" transform="rotate(-12 389.1 226.5)"/>
<ellipse cx="395.5" cy="241.4" rx="0.7" ry="2.1" transform="rotate(-13 395.5 241.4)"/>
<ellipse cx="387.5" cy="274.6" rx="0.7" ry="2.0" transform="rotate(-13 387.5 274.6)"/>
<ellipse cx="378.1" cy="241.7" rx="0.7" ry="1.6" transform="rotate(-7 378.1 241.7)"/>
<ellipse cx="402.9" cy="236.5" rx="0.7" ry="1.7" transform="rotate(11 402.9 236.5)"/>
<ellipse cx="356.5" cy="282.7" rx="0.7" ry="2.3" transform="rotate(5 356.5 282.7)"/>
<ellipse cx="403.8" cy="257.5" rx="0.7" ry="2.1" transform="rotate(20 403.8 257.5)"/>
<ellipse cx="379.7" cy="257.3" rx="0.7" ry="2.3" transform="rotate(8 379.7 257.3)"/>
<ellipse cx="380.2" cy="252.9" rx="0.7" ry="2.1" transform="rotate(19 380.2 252.9)"/>
<ellipse cx="380.2" cy="258.2" rx="0.7" ry="1.8" transform="rotate(-18 380.2 258.2)"/>
<ellipse cx="398.1" cy="278.5" rx="0.7" ry="2.0" transform="rotate(8 398.1 278.5)"/>
<ellipse cx="397.3" cy="255.8" rx="0.7" ry="1.9" transform="rotate(-10 397.3 255.8)"/>
<ellipse cx="383.2" cy="272.8" rx="0.7" ry="1.9" transform="rotate(-12 383.2 272.8)"/>
<ellipse cx="367.6" cy="225.1" rx="0.7" ry="1.7" transform="rotate(3 367.6 225.1)"/>
<ellipse cx="371.8" cy="274.2" rx="0.7" ry="1.7" transform="rotate(-1 371.8 274.2)"/>
<ellipse cx="363.3" cy="263.5" rx="0.7" ry="1.5" transform="rotate(-11 363.3 263.5)"/>
<ellipse cx="376.0" cy="271.7" rx="0.7" ry="1.8" transform="rotate(-11 376.0 271.7)"/>
<ellipse cx="383.9" cy="276.8" rx="0.7" ry="1.5" transform="rotate(-15 383.9 276.8)"/>
<ellipse cx="400.6" cy="248.7" rx="0.7" ry="1.9" transform="rotate(-0 400.6 248.7)"/>
<ellipse cx="380.7" cy="246.5" rx="0.7" ry="1.4" transform="rotate(8 380.7 246.5)"/>
<ellipse cx="390.0" cy="295.0" rx="0.7" ry="1.8" transform="rotate(14 390.0 295.0)"/>
<ellipse cx="380.2" cy="299.0" rx="0.7" ry="1.4" transform="rotate(-8 380.2 299.0)"/>
<ellipse cx="395.1" cy="254.9" rx="0.7" ry="1.9" transform="rotate(15 395.1 254.9)"/>
<ellipse cx="364.0" cy="227.1" rx="0.7" ry="1.2" transform="rotate(5 364.0 227.1)"/>
<ellipse cx="405.0" cy="240.7" rx="0.7" ry="1.8" transform="rotate(-3 405.0 240.7)"/>
<ellipse cx="379.6" cy="286.2" rx="0.7" ry="2.3" transform="rotate(3 379.6 286.2)"/>
<ellipse cx="378.5" cy="292.8" rx="0.7" ry="1.7" transform="rotate(-8 378.5 292.8)"/>
<ellipse cx="378.8" cy="273.6" rx="0.7" ry="1.5" transform="rotate(10 378.8 273.6)"/>
<ellipse cx="372.9" cy="226.7" rx="0.7" ry="2.0" transform="rotate(15 372.9 226.7)"/>
<ellipse cx="402.9" cy="298.6" rx="0.7" ry="1.3" transform="rotate(19 402.9 298.6)"/>
<ellipse cx="402.4" cy="291.5" rx="0.7" ry="1.2" transform="rotate(7 402.4 291.5)"/>
<ellipse cx="363.1" cy="292.3" rx="0.7" ry="1.5" transform="rotate(-18 363.1 292.3)"/>
<ellipse cx="384.9" cy="276.0" rx="0.7" ry="1.8" transform="rotate(-4 384.9 276.0)"/>
<ellipse cx="355.8" cy="278.4" rx="0.7" ry="1.2" transform="rotate(3 355.8 278.4)"/>
<ellipse cx="357.5" cy="257.5" rx="0.7" ry="1.9" transform="rotate(-10 357.5 257.5)"/>
<ellipse cx="394.2" cy="242.0" rx="0.7" ry="2.2" transform="rotate(-4 394.2 242.0)"/>
<ellipse cx="390.5" cy="257.2" rx="0.7" ry="1.6" transform="rotate(-16 390.5 257.2)"/>
<ellipse cx="386.3" cy="226.0" rx="0.7" ry="1.8" transform="rotate(-4 386.3 226.0)"/>
<ellipse cx="368.4" cy="241.6" rx="0.7" ry="1.8" transform="rotate(15 368.4 241.6)"/>
<ellipse cx="396.5" cy="246.0" rx="0.7" ry="1.9" transform="rotate(5 396.5 246.0)"/>
<ellipse cx="392.4" cy="270.8" rx="0.7" ry="1.3" transform="rotate(-14 392.4 270.8)"/>
<ellipse cx="396.2" cy="242.5" rx="0.7" ry="1.9" transform="rotate(-18 396.2 242.5)"/>
</g>
<polygon points="199.0,329.9 202.8,328.0 206.9,327.2 211.9,324.5 215.2,322.5 218.9,321.3 220.9,318.9 224.0,317.4 225.3,314.2 228.2,312.7 229.8,309.8 232.3,307.5 234.7,305.0 237.0,302.5 238.9,299.3 241.2,296.4 244.1,295.1 246.0,292.5 249.0,291.3 251.5,289.7 254.6,288.0 256.8,285.1 260.0,283.5 264.5,284.0 268.6,286.2 271.4,287.8 274.7,288.0 277.4,289.9 280.6,290.5 283.8,290.4 286.6,292.1 289.8,292.2 292.5,293.8 296.3,292.4 299.1,289.3 302.9,287.9 305.4,285.4 308.5,283.6 312.0,282.7 314.3,279.8 317.3,278.0 321.0,277.1 323.4,274.4 325.1,271.8 326.9,269.3 329.4,267.4 330.7,264.6 333.1,262.6 334.9,259.7 337.6,257.6 338.7,254.3 341.3,252.0 342.3,248.8 345.1,246.5 346.7,243.6 348.1,240.6 349.3,237.4 350.6,234.5 352.8,232.0 353.8,229.0 354.6,225.7 357.1,223.4 358.8,220.7 359.5,217.4 361.0,214.0 363.6,211.2 364.9,207.8 367.6,205.9 370.8,204.9 374.2,204.8 377.5,204.7 381.4,206.5 385.8,206.2 387.5,209.3 388.8,212.7 390.7,215.8 392.6,218.7 394.3,221.7 395.8,224.9 397.6,227.8 400.7,230.0 402.3,233.1 403.0,236.3 404.6,238.9 407.1,241.0 408.7,243.7 409.9,246.6 411.8,249.0 414.3,251.6 416.1,254.7 417.9,257.7 419.6,260.8 422.6,263.0 424.6,266.3 427.4,268.9 431.3,269.5 433.8,267.5 436.1,265.4 438.1,263.3 441.5,266.0 445.1,268.6 448.2,270.9 452.1,271.8 454.8,274.8 457.8,275.9 460.9,276.2 464.1,276.1 466.9,277.5 469.9,277.7 472.9,276.6 475.7,275.0 478.9,274.4 481.9,272.8 485.6,274.4 488.3,277.5 492.1,278.8 494.7,280.3 497.9,280.7 500.2,282.9 503.0,284.2 506.3,283.9 509.3,282.5 512.5,281.5 515.8,281.8 519.0,280.9 522.7,281.3 526.4,281.8 530.0,282.9 532.2,285.3 534.9,286.9 537.1,289.2 539.4,291.3 541.7,293.4 544.5,295.0 546.4,297.5 549.4,298.6 551.8,300.4 554.2,302.4 556.3,304.6 559.0,306.0 561.5,307.7 564.5,309.1 566.7,311.5 569.0,313.7 572.6,314.6 576.2,315.5 580.1,315.3 583.6,316.7 587.0,318.4 590.4,319.9 593.9,320.7 596.9,322.6 599.9,324.4 603.0,326.0 606.5,326.9 608.6,329.8 610.9,332.6 613.7,334.8 616.7,335.7 613.0,341.2 609.7,341.3 606.4,341.6 603.3,343.1 600.0,343.6 597.0,343.9 594.1,345.0 591.2,346.1 588.0,346.2 584.7,346.3 581.5,347.1 578.3,347.7 575.0,348.1 572.1,349.3 568.9,349.0 566.0,350.3 562.9,350.5 560.0,351.5 556.9,351.6 553.9,352.4 551.1,354.2 548.0,354.4 545.1,355.3 541.8,356.0 539.2,358.2 535.7,358.5 533.2,361.0 530.0,362.0 527.0,363.0 523.8,363.5 521.0,364.9 518.0,365.8 514.7,366.3 511.3,366.7 508.0,366.7 504.7,366.9 501.3,365.9 498.0,366.2 495.0,365.8 492.0,365.6 489.0,366.5 486.0,366.5 483.0,365.4 480.0,366.3 477.0,365.6 474.0,365.1 471.0,364.9 468.0,364.8 465.0,364.1 462.0,363.9 459.0,364.9 456.0,364.7 453.3,364.5 451.5,367.9 449.1,370.8 447.0,374.1 450.3,374.0 453.7,374.2 456.8,375.6 460.1,376.0 463.4,376.1 466.8,376.0 470.0,376.8 473.2,377.0 476.3,378.2 479.4,378.7 482.7,377.6 485.8,379.4 488.9,379.7 492.1,379.8 495.4,379.2 498.4,380.7 501.6,380.8 504.9,380.1 508.1,381.3 504.1,382.9 500.0,384.4 497.0,385.4 494.0,384.1 491.0,384.7 488.0,385.1 485.0,385.3 482.0,386.0 479.0,385.2 476.0,385.3 473.0,386.6 470.0,385.8 467.0,386.2 464.0,385.3 461.0,386.3 458.0,386.5 455.0,386.5 452.0,386.3 449.0,386.7 446.0,386.5 443.0,386.0 440.0,386.0 436.7,385.6 433.3,385.9 429.9,385.8 426.6,385.2 423.4,383.7 420.0,384.2 416.7,383.3 413.3,383.1 410.0,382.6 406.8,381.6 403.3,382.3 400.0,381.4 396.7,381.1 393.3,380.9 390.0,380.4 386.6,380.3 383.3,380.1 380.1,378.7 377.0,378.2 373.9,378.4 371.1,376.8 367.9,377.2 365.0,375.8 362.0,375.5 358.4,376.9 355.4,379.3 351.9,380.7 348.5,381.5 345.2,382.7 341.9,384.0 338.5,384.6 335.0,385.2 331.9,385.0 328.8,384.5 325.6,384.6 322.5,384.9 319.7,383.7 316.9,382.5 314.6,380.4 311.8,379.2 309.0,377.9 305.8,377.7 302.7,377.0 299.5,377.1 296.3,377.4 293.2,377.0 290.0,376.6 286.9,376.7 283.8,375.6 280.6,375.8 277.5,375.9 274.4,376.0 271.2,375.8 268.1,376.3 265.0,375.6 261.9,375.1 258.7,375.2 255.6,374.6 252.6,373.5 249.4,373.3 246.2,374.2 243.2,372.5 240.0,372.7 236.8,372.7 233.6,373.0 230.5,374.3 227.3,374.7 224.1,374.2 220.9,374.2 217.8,375.6 214.7,376.1 211.4,375.3 208.1,374.9 204.9,376.0 201.6,375.1 198.3,375.9 195.1,375.1 191.7,375.9 189.0,374.4 185.9,373.9 183.3,372.2 180.1,372.0 177.6,370.2 175.5,367.8 174.6,364.9 172.6,362.5 171.7,359.6 170.2,356.7 173.0,353.4 176.0,352.6 179.1,352.1 182.0,351.1 185.0,350.5 188.1,350.6 191.0,349.4 193.9,348.8 197.6,348.4 200.9,347.0 204.7,347.0 208.0,345.6 205.1,346.5 202.0,346.2 198.9,345.5 196.0,346.5 193.0,346.3 190.0,347.3 187.0,347.2 184.0,347.9 181.0,348.1 178.0,348.2 175.0,347.8 172.0,347.7 166.8,346.0 171.0,344.7 174.6,343.6 178.3,343.0 182.0,342.5 185.4,341.8 189.0,341.8 192.6,342.2 196.0,341.0 199.2,340.4 202.2,339.2 205.6,339.4 208.8,338.5 212.0,338.1 209.0,338.3 206.0,338.7 203.0,338.6 200.0,338.8 197.0,338.4 194.0,338.3 191.0,338.5 188.0,339.4 184.8,340.1 181.5,339.0 178.3,339.5 175.0,339.5 170.9,338.5 166.9,338.2 172.0,336.3 175.2,335.7 178.4,334.8 181.6,334.2 185.0,334.3 188.4,333.5 192.1,334.3 195.5,333.3 199.0,332.7" fill="none" stroke="#444" stroke-width="0.7" opacity="0.6"/>
</g>
<g filter="url(#grass)">
<g clip-path="url(#terclip)"><polygon points="150.0,324.0 207.0,324.0 215.0,333.0 300.0,339.5 400.0,338.0 470.0,333.0 520.0,320.0 545.0,309.0 565.0,307.0 580.0,310.0 630.0,326.0 700.0,343.0 700.0,400.0 150.0,400.0" fill="#4a7452" filter="url(#b3)"/><polygon points="150.0,337.0 207.0,337.0 215.0,346.0 300.0,352.5 400.0,351.0 470.0,346.0 520.0,333.0 545.0,322.0 565.0,320.0 580.0,323.0 630.0,339.0 700.0,356.0 700.0,400.0 150.0,400.0" fill="#236826" filter="url(#b3)"/><polygon points="150.0,360.0 250.0,362.0 330.0,368.0 400.0,368.0 450.0,358.0 520.0,354.0 560.0,346.0 620.0,346.0 700.0,350.0 700.0,400.0 150.0,400.0" fill="#0d4e10" filter="url(#b3)" opacity="0.85"/>
<polygon points="236,336 262,333 275,345 268,356 246,352" fill="#143c16" opacity="0.7" filter="url(#b2)"/>
<polygon points="300,346 360,342 420,350 440,372 380,374 330,368" fill="#0c4a10" opacity="0.55" filter="url(#b3)"/>
<polygon points="196,338 216,336 226,352 214,368 196,366" fill="#3a963c" opacity="0.5" filter="url(#b2)"/>
<polygon points="418,338 470,334 480,350 440,360" fill="#4a9a4c" opacity="0.45" filter="url(#b2)"/>
<polygon points="484,316 520,332 545,356 520,364 495,345" fill="#0e4c12" opacity="0.5" filter="url(#b2)"/>
<polygon points="545,310 570,316 600,330 585,345 555,335" fill="#3c963e" opacity="0.4" filter="url(#b2)"/>
</g>
<polyline points="200.0,345.0 215.0,342.0 232.0,346.0 250.0,352.0 262.0,360.0" fill="none" stroke="#0a300c" stroke-width="0.8" opacity="0.6" stroke-linejoin="round"/>
<polyline points="300.0,350.0 330.0,346.0 356.0,350.0 380.0,356.0 410.0,352.0 430.0,360.0" fill="none" stroke="#0a300c" stroke-width="0.8" opacity="0.6" stroke-linejoin="round"/>
<polyline points="430.0,352.0 450.0,346.0 470.0,350.0 490.0,362.0" fill="none" stroke="#0a300c" stroke-width="0.8" opacity="0.6" stroke-linejoin="round"/>
<polyline points="550.0,330.0 570.0,334.0 590.0,338.0 606.0,346.0" fill="none" stroke="#0a300c" stroke-width="0.8" opacity="0.6" stroke-linejoin="round"/>
<polyline points="360.0,364.0 390.0,362.0 420.0,368.0 445.0,372.0" fill="none" stroke="#0a300c" stroke-width="0.8" opacity="0.6" stroke-linejoin="round"/>
<polygon points="552,354 565,352 580,350.3 600,350 611,352.5 600,354.2 575,355" fill="#1c6c1e"/>
<polygon points="633,353 645,351.5 665,349.5 680,351.5 692,354 680,355.5 650,355.5" fill="#20701f"/>
</g>
<g filter="url(#grass)"><polygon points="211.0,370.0 214.6,368.6 218.2,367.2 222.0,366.3 225.0,366.1 228.0,366.3 231.0,366.4 234.0,365.8 237.3,366.8 240.7,367.5 244.0,368.5 247.0,368.5 250.2,368.0 251.2,371.8 252.0,375.7 249.0,375.1 245.9,375.0 243.0,374.0 240.0,373.6 236.7,374.2 233.3,374.3 230.0,374.5 226.7,374.7 223.3,374.8 220.0,375.6 217.0,374.8 214.0,375.3 211.1,375.0" fill="#384838"/></g>
<polygon points="217.3,363 246.4,364 248,367.5 222,368.5" fill="#700870"/>
<rect x="219" y="338.5" width="14.3" height="26" fill="url(#gcyl)"/>
<ellipse cx="226.15" cy="338.6" rx="7.15" ry="2.6" fill="#a818a8"/><ellipse cx="226.15" cy="337.6" rx="4.5" ry="1.6" fill="#a010a0"/>
<ellipse cx="226.15" cy="364.4" rx="7.15" ry="1.6" fill="#8a0c8a"/>
<rect x="245.8" y="350" width="32.2" height="14.5" rx="3" fill="url(#gtank)"/>
<rect x="236.3" y="357" width="9.5" height="9.2" fill="#9c129c"/>
<polygon points="245.8,357 248.8,356 248.8,364.5 245.8,366.2" fill="#760876"/>
<g filter="url(#grass)"><polygon points="247.0,370.0 249.5,368.0 252.0,366.1 257.1,363.1 261.9,359.8 264.4,357.4 267.4,355.5 270.2,353.4 273.1,354.7 276.0,356.2 279.5,356.0 283.0,356.2 286.5,356.7 290.0,356.9 293.3,356.9 296.7,357.0 300.0,356.8 303.1,356.8 306.0,356.2 309.1,355.8 312.0,355.0 316.0,354.4 320.0,354.6 325.6,353.7 328.7,355.2 331.9,356.1 335.2,357.6 338.1,359.9 340.8,363.2 344.2,365.8 347.2,368.8 350.0,372.0 354.0,374.9 351.0,375.5 348.0,375.1 345.0,374.6 342.0,375.3 339.0,374.9 336.0,374.3 333.0,374.6 330.0,374.4 327.0,374.9 324.0,374.4 321.0,375.1 318.0,374.6 315.0,374.5 312.0,375.5 309.0,375.1 305.7,375.3 302.3,374.7 299.0,375.8 295.7,375.4 292.3,374.8 289.0,375.7 285.8,375.0 282.6,376.1 279.3,375.5 276.1,375.7 272.9,375.4 269.7,376.0 266.4,375.8 263.2,375.3 260.0,376.0 256.8,374.9 253.4,375.4 250.2,374.8 246.9,374.0" fill="#4b594b" stroke="#2c382c" stroke-width="0.6"/><polygon points="270,354 300,357.5 326,354 345,368 330,372 300,364 280,362" fill="#5a6a5a" opacity="0.6" filter="url(#b2)"/>
<polygon points="284.0,375.0 300.0,373.5 330.0,373.0 350.0,372.5 362.0,375.5 357.0,379.0 352.0,381.5 344.0,384.0 335.0,385.5 322.5,385.5 314.0,382.0 309.0,378.5 296.0,377.0" fill="#0e4e10"/></g>
<g fill="#f80808"><polygon points="182.6,313.7 180.1,328.7 185.5,328.7"/><polygon points="182.79999999999998,320.7 182.1,327.2 183.5,327.2" fill="#ffd0d0" opacity="0.7"/><ellipse cx="183.1" cy="329.2" rx="14.4" ry="1.10"/><rect x="173.1" y="329.2" width="4.9" height="5.4" rx="1"/><rect x="178.8" y="329.2" width="8.0" height="6.4" rx="1.2"/><rect x="188.1" y="329.2" width="5.0" height="4.6" rx="1"/></g>
<g fill="#f80808"><polygon points="623.75,325.2 620.9,342.3 626.9,342.3"/><polygon points="623.9,332 623.3,341 624.8,341" fill="#ffd0d0" opacity="0.7"/><ellipse cx="623.7" cy="343.2" rx="13.2" ry="1.5"/><rect x="613.6" y="343.2" width="6.2" height="7.3" rx="1.2"/><rect x="627" y="343.2" width="7" height="7.8" rx="1.3"/><rect x="621.3" y="343" width="3.4" height="6"/></g>
<path d="M197.4,314.2 L196.6,320 L195.4,326.6 L199.9,326.6 L198.6,320 Z" fill="#fff" stroke="#9a9a9a" stroke-width="0.6"/>
<rect x="322.3" y="165.3" width="171" height="24" rx="2.5" fill="#81dcba" stroke="#e3ebe7" stroke-width="1.8"/>
<text x="408.2" y="181.2" text-anchor="middle" font-family="Liberation Serif, serif" font-weight="bold" font-size="14.1" fill="#ffffff">Oil Rigs on Imaginary Sea</text>
<g transform="matrix(1.0000,-0.0161,0.0000,1.0000,157.00,297.60)" opacity="0.95" filter="url(#b05)"><rect x="0" y="0" width="49.7" height="14" rx="2" fill="#fbfbfb" stroke="#6a6868" stroke-width="1.2"/><text x="24.85" y="9.99" text-anchor="middle" font-family="Liberation Sans, sans-serif" font-size="8.3" font-weight="normal" fill="#7a7a7a">Oil Rig Two</text></g>
<g transform="matrix(1.0000,-0.0285,0.0136,1.0000,218.30,304.70)" opacity="0.88" filter="url(#b03)"><rect x="0" y="0" width="59.7" height="22" rx="2" fill="#e9e9e9" stroke="#5c5a5a" stroke-width="1.5"/><text x="29.85" y="15.64" text-anchor="middle" font-family="Liberation Sans, sans-serif" font-size="12.9" font-weight="normal" fill="#2c2c2c">Refinery</text></g>
<g transform="matrix(0.8190,-0.0354,0.0000,1.0061,602.10,305.50)" opacity="0.9" filter="url(#b05)"><rect x="0" y="0" width="53.6" height="16.3" rx="2" fill="#fbfbfb" stroke="#6a6868" stroke-width="1.3"/><text x="26.8" y="11.35" text-anchor="middle" font-family="Liberation Sans, sans-serif" font-size="8.9" font-weight="normal" fill="#808080">Oil Rig One</text></g>
<rect x="90" y="203.2" width="31.800000000000004" height="13.2" rx="2" fill="#fefefe" stroke="#686666" stroke-width="1.15"/>
<text x="118.80000000000001" y="213.2" text-anchor="end" font-family="Liberation Sans, sans-serif" font-size="9.3" fill="#747474" filter="url(#b05)">600.00</text>
<rect x="90" y="243.6" width="32.800000000000004" height="13.2" rx="2" fill="#fefefe" stroke="#686666" stroke-width="1.15"/>
<text x="119.80000000000001" y="253.6" text-anchor="end" font-family="Liberation Sans, sans-serif" font-size="9.3" fill="#747474" filter="url(#b05)">500.00</text>
<rect x="90" y="283.6" width="33.99999999999999" height="13.2" rx="2" fill="#fefefe" stroke="#686666" stroke-width="1.15"/>
<text x="121.0" y="293.6" text-anchor="end" font-family="Liberation Sans, sans-serif" font-size="9.3" fill="#747474" filter="url(#b05)">400.00</text>
<rect x="90" y="323.3" width="35.699999999999996" height="13.2" rx="2" fill="#fefefe" stroke="#686666" stroke-width="1.15"/>
<text x="122.7" y="333.3" text-anchor="end" font-family="Liberation Sans, sans-serif" font-size="9.3" fill="#747474" filter="url(#b05)">300.00</text>
<rect x="90" y="362.6" width="36.99999999999999" height="13.2" rx="2" fill="#fefefe" stroke="#686666" stroke-width="1.15"/>
<text x="124.0" y="372.6" text-anchor="end" font-family="Liberation Sans, sans-serif" font-size="9.3" fill="#747474" filter="url(#b05)">200.00</text>
<rect x="90" y="401.40000000000003" width="38.4" height="13.2" rx="2" fill="#fefefe" stroke="#686666" stroke-width="1.15"/>
<text x="125.4" y="411.40000000000003" text-anchor="end" font-family="Liberation Sans, sans-serif" font-size="9.3" fill="#747474" filter="url(#b05)">100.00</text>
<g filter="url(#b05)"><polygon points="100,418.3 130,417.3 130,420.3 100,421.4" fill="#dedede" stroke="#c6c6c6" stroke-width="0.9"/><line x1="110" y1="419.7" x2="125" y2="418.9" stroke="#c0c0c0" stroke-width="0.9" stroke-dasharray="5 2 3 2 4 3"/></g>
<g filter="url(#b05)"><polygon points="100,438 136.3,435.4 136.3,438.8 100,442" fill="#ededed" stroke="#b4b4b4" stroke-width="0.9"/><line x1="110" y1="439.6" x2="131.3" y2="437.4" stroke="#bcbcbc" stroke-width="1.2" stroke-dasharray="5 2 3 2 4 3"/></g>
<g filter="url(#b05)"><polygon points="100,462 143.8,458 143.8,463.2 100,467" fill="#f2f2f2" stroke="#a8a8a8" stroke-width="0.9"/><line x1="110" y1="463.9" x2="138.8" y2="461.0" stroke="#b0b0b0" stroke-width="1.5" stroke-dasharray="5 2 3 2 4 3"/></g>
<g transform="matrix(3.6076,-0.4747,0.0000,1.0000,96.00,495.70)" opacity="1" filter="url(#b05)"><rect x="0" y="0" width="15.8" height="6.5" rx="0.6" fill="#f6f6f6" stroke="#8e8e8e" stroke-width="0.55"/><text x="9.4" y="4.55" text-anchor="middle" font-family="Liberation Sans, sans-serif" font-size="3.6" font-weight="bold" fill="#909090">20.4 E</text></g>
<g transform="matrix(2.5286,-0.3877,0.0000,1.0000,110.30,537.80)" opacity="1" filter="url(#b05)"><rect x="0" y="0" width="22.7" height="9.1" rx="0.8" fill="#fafafa" stroke="#7c7c7c" stroke-width="0.75"/><text x="11.35" y="6.57" text-anchor="middle" font-family="Liberation Sans, sans-serif" font-size="5.6" font-weight="bold" fill="#8c8c8c">19.2 E</text></g>
<g transform="matrix(0.9820,-0.1622,0.0000,1.0167,162.80,591.80)" opacity="1"><rect x="0" y="0" width="22.2" height="12" rx="2" fill="#fafafa" stroke="#777" stroke-width="1.2"/><text x="11.1" y="8.88" text-anchor="middle" font-family="Liberation Sans, sans-serif" font-size="8" font-weight="normal" fill="#777"></text></g>
<g transform="matrix(0.6350,0.5875,-1.7071,0.3857,396.00,565.10)" opacity="1" filter="url(#b03)"><rect x="0" y="0" width="40" height="14" rx="2" fill="#fbfbfb" stroke="#605e5e" stroke-width="1.1"/><text x="20.0" y="10.78" text-anchor="middle" font-family="Liberation Sans, sans-serif" font-size="10.5" font-weight="normal" fill="#707070">35.2 N</text></g>
<g transform="matrix(0.7262,0.4524,-1.4929,0.2714,523.80,536.70)" opacity="1" filter="url(#b05)"><rect x="0" y="0" width="42" height="14" rx="2" fill="#fbfbfb" stroke="#686666" stroke-width="1.1"/><text x="21.0" y="10.78" text-anchor="middle" font-family="Liberation Sans, sans-serif" font-size="10.5" font-weight="normal" fill="#6e6e6e">36.4 N</text></g>
<g transform="matrix(0.8167,0.3714,-1.2286,0.2143,628.60,514.60)" opacity="1" filter="url(#b05)"><rect x="0" y="0" width="42" height="14" rx="2" fill="#fbfbfb" stroke="#757373" stroke-width="1.1"/><text x="21.0" y="10.78" text-anchor="middle" font-family="Liberation Sans, sans-serif" font-size="10.5" font-weight="normal" fill="#8a8a8a">37.6 N</text></g>
<g transform="matrix(0.7857,0.2857,-0.8571,0.1786,712.00,494.00)" opacity="1" filter="url(#b07)"><rect x="0" y="0" width="42" height="14" rx="2" fill="#fbfbfb" stroke="#8a8888" stroke-width="1.2"/><text x="21.0" y="10.60" text-anchor="middle" font-family="Liberation Sans, sans-serif" font-size="10" font-weight="normal" fill="#aaa">38.8 N</text></g>
</g>
<path d="M0,0 H4.5 A4.5,4.5 0 0 0 0,4.5 Z" fill="#1c1c1c"/><path d="M840,0 H835.5 A4.5,4.5 0 0 1 840,4.5 Z" fill="#1c1c1c"/>
<g fill="#8c8c8c"><polygon points="829,4.3 835.7,4.3 835.7,10.6"/><polygon points="822.1,11 822.1,17.6 828.8,17.6"/><path d="M833.6,5.6 L834.6,6.6 L830.6,10.3 L829.5,9.2 Z"/><path d="M824.3,15.5 L823.3,14.5 L827.3,11.2 L828.3,12.2 Z"/></g>

<polyline points="25.8,67.8 29.3,71.7 36,61.7" fill="none" stroke="#0c1430" stroke-width="2.4" stroke-linecap="round" stroke-linejoin="round"/>
<polyline points="25.8,86.8 29.3,90.7 36,80.7" fill="none" stroke="#0c1430" stroke-width="2.4" stroke-linecap="round" stroke-linejoin="round"/>
<polyline points="25.8,105.8 29.3,109.7 36,99.7" fill="none" stroke="#0c1430" stroke-width="2.4" stroke-linecap="round" stroke-linejoin="round"/>
<polyline points="725.8,105.8 729.3,109.7 736,99.7" fill="none" stroke="#0c1430" stroke-width="2.4" stroke-linecap="round" stroke-linejoin="round"/>

</svg>
</body></html>
